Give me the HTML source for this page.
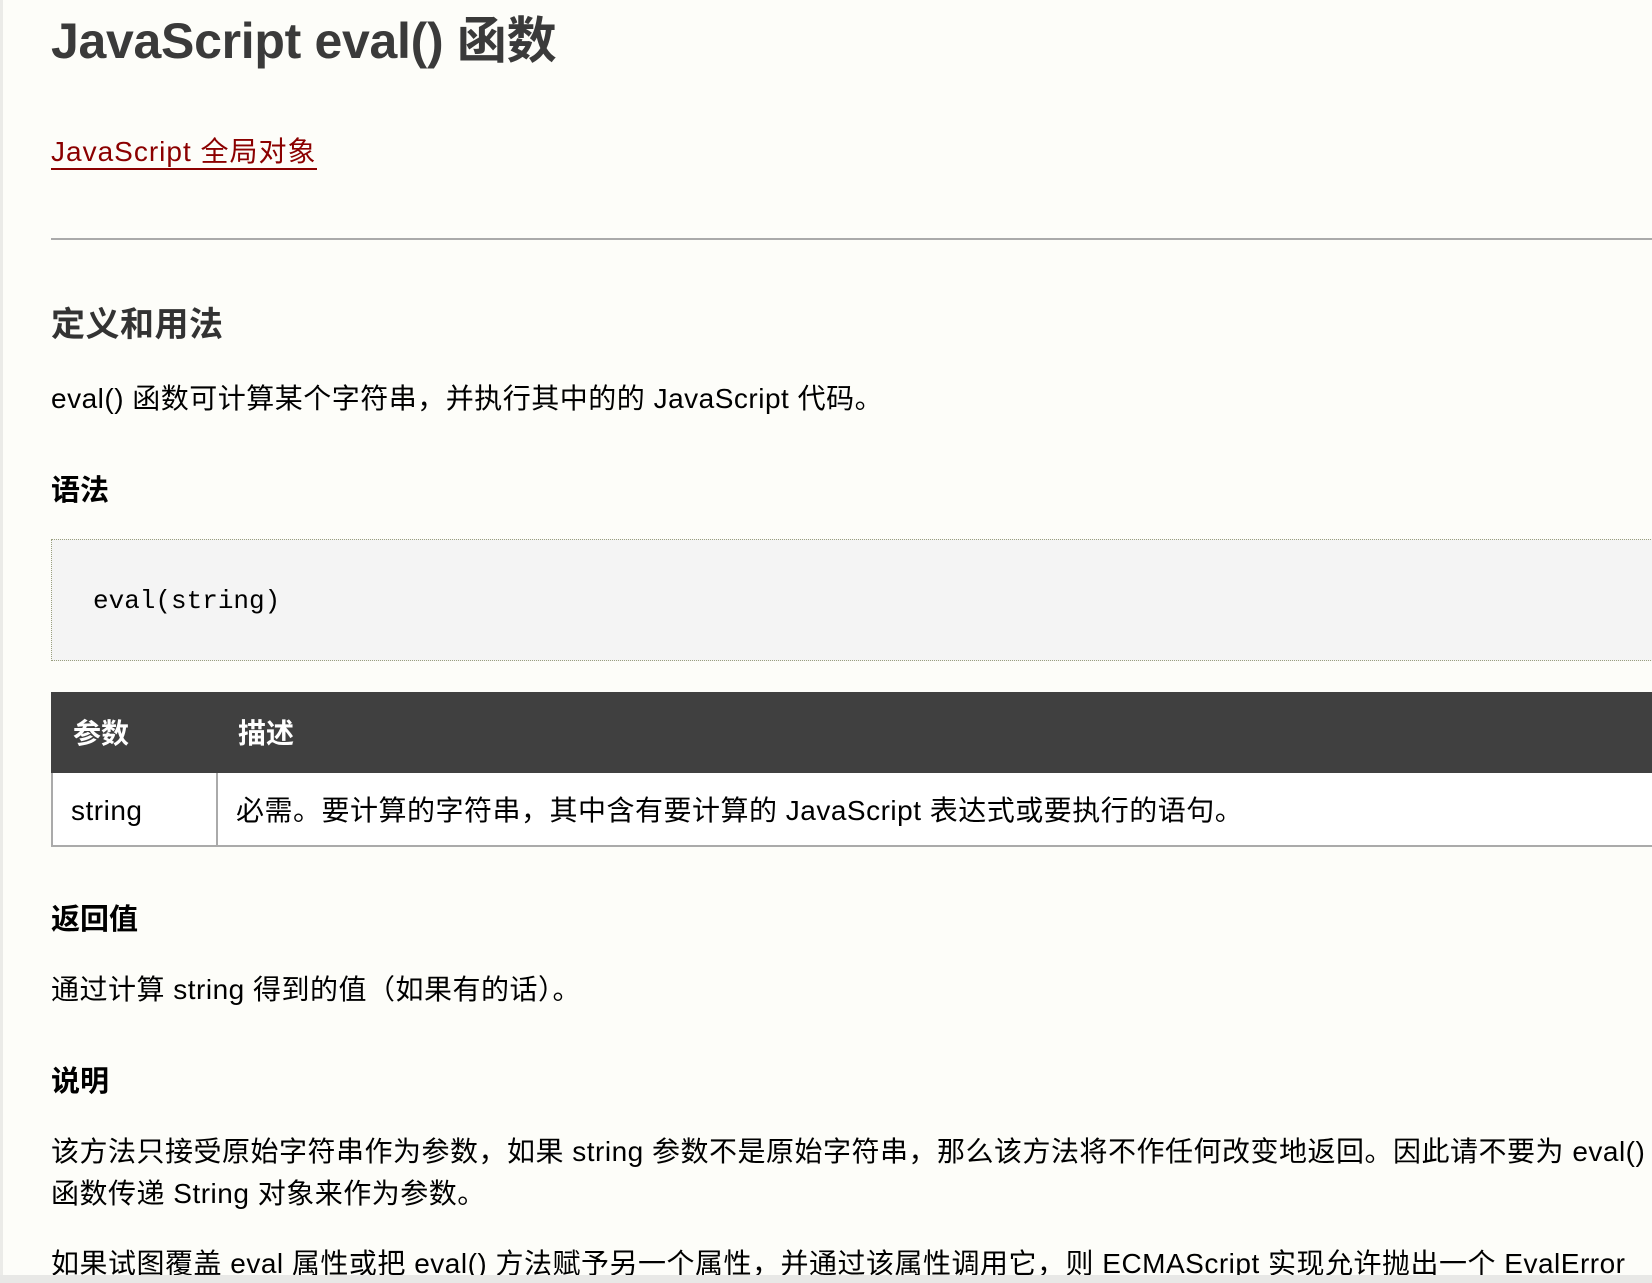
<!DOCTYPE html>
<html><head><meta charset="utf-8"><style>
body{margin:0;width:1652px;height:1283px;overflow:hidden;background:#fdfdf9;position:relative;font-family:"Liberation Sans","Noto Sans CJK SC",sans-serif;color:#000}
.a{position:absolute;white-space:nowrap;line-height:1}
.t{letter-spacing:0.5px}
.lb{position:absolute;left:0;top:0;width:3px;height:1283px;background:#ebebe8}
</style></head><body>
<div class="lb"></div>
<div class="a" style="left:51px;top:16px;font-size:50px;font-weight:bold;color:#3a3a3a;letter-spacing:-0.3px">JavaScript eval() 函数</div>
<div class="a" style="left:51px;top:138px;font-size:28px;color:#8b0000;border-bottom:2px solid #8b0000;padding-bottom:2px;letter-spacing:1px">JavaScript 全局对象</div>
<div style="position:absolute;left:51px;top:238px;width:1601px;height:2px;background:#aaa"></div>
<div class="a" style="left:51px;top:308px;font-size:34px;font-weight:bold;color:#333;letter-spacing:0.5px">定义和用法</div>
<div class="a t" style="left:51px;top:385px;font-size:28px">eval() 函数可计算某个字符串，并执行其中的的 JavaScript 代码。</div>
<div class="a" style="left:51px;top:477px;font-size:29px;font-weight:bold">语法</div>
<div style="position:absolute;left:51px;top:539px;width:1610px;height:120px;background:#f4f4f4;border:1px dotted #9a9f7f"></div>
<div class="a" style="left:93px;top:588px;font-size:26px;font-family:'Liberation Mono',monospace">eval(string)</div>
<div style="position:absolute;left:51px;top:692px;width:1610px;height:81px;background:#404040"></div>
<div class="a" style="left:73px;top:720px;font-size:28px;font-weight:bold;color:#fff">参数</div>
<div class="a" style="left:238px;top:720px;font-size:28px;font-weight:bold;color:#fff">描述</div>
<div style="position:absolute;left:51px;top:773px;width:1610px;height:72px;background:#fff;border:2px solid #aaa;border-top:0"></div>
<div style="position:absolute;left:216px;top:773px;width:2px;height:72px;background:#aaa"></div>
<div class="a t" style="left:71px;top:797px;font-size:28px">string</div>
<div class="a t" style="left:236px;top:797px;font-size:28px">必需。要计算的字符串，其中含有要计算的 JavaScript 表达式或要执行的语句。</div>
<div class="a" style="left:51px;top:906px;font-size:29px;font-weight:bold">返回值</div>
<div class="a t" style="left:51px;top:976px;font-size:28px">通过计算 string 得到的值（如果有的话）。</div>
<div class="a" style="left:51px;top:1068px;font-size:29px;font-weight:bold">说明</div>
<div class="a t" style="left:51px;top:1138px;font-size:28px">该方法只接受原始字符串作为参数，如果 string 参数不是原始字符串，那么该方法将不作任何改变地返回。因此请不要为 eval()</div>
<div class="a t" style="left:51px;top:1180px;font-size:28px">函数传递 String 对象来作为参数。</div>
<div class="a t" style="left:51px;top:1250px;font-size:28px">如果试图覆盖 eval 属性或把 eval() 方法赋予另一个属性，并通过该属性调用它，则 ECMAScript 实现允许抛出一个 EvalError</div>
<div style="position:absolute;left:0;top:1275px;width:1652px;height:8px;background:#e8e8e6"></div>
</body></html>
